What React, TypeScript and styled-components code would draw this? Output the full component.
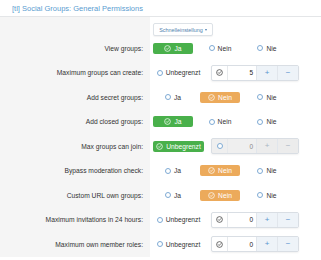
import React from "react";
import styled, { createGlobalStyle, css } from "styled-components";

const Global = createGlobalStyle`
  html, body { margin: 0; padding: 0; background: #fff; }
  body { font-family: "Liberation Sans", Arial, sans-serif; color: #333; }
`;

const Page = styled.div`
  width: 321px;
  height: 260px;
  overflow: hidden;
  background: #fff;
`;

const Header = styled.div`
  height: 16px;
  border-bottom: 1px solid #e4e6e8;
  display: flex;
  align-items: center;
  padding-left: 12px;
`;

const Title = styled.h2`
  margin: 0;
  font-weight: normal;
  font-size: 7.5px;
  color: #5b9dd0;
  white-space: nowrap;
`;

const Row = styled.div<{ $h: number }>`
  display: grid;
  grid-template-columns: 150px 1fr;
  height: ${(p) => p.$h}px;
`;

const Label = styled.div`
  background: #f5f5f5;
  display: flex;
  align-items: center;
  justify-content: flex-end;
  padding-right: 7px;
  font-size: 6.7px;
  color: #333;
  white-space: nowrap;
`;

const Content = styled.div<{ $align?: string }>`
  display: flex;
  align-items: ${(p) => p.$align || "center"};
  padding-left: 3px;
  gap: 7px;
`;

const MenuButton = styled.div`
  margin-top: 6px;
  height: 13px;
  width: 60px;
  box-sizing: border-box;
  border: 1px solid #dde2e7;
  border-radius: 2px;
  background: #fff;
  display: flex;
  align-items: center;
  justify-content: center;
  gap: 2px;
  font-size: 5.4px;
  color: #4f7fae;
  box-shadow: 0 1px 1px rgba(0, 0, 0, 0.05);
`;

const Caret = styled.span`
  width: 0;
  height: 0;
  border-left: 1.5px solid transparent;
  border-right: 1.5px solid transparent;
  border-top: 2px solid #4f7fae;
`;

const tones = {
  green: "#49b04b",
  orange: "#ecaa5b",
};

const Option = styled.div<{ $w: number; $on?: "green" | "orange" }>`
  width: ${(p) => p.$w}px;
  height: 11px;
  border-radius: 2px;
  display: flex;
  align-items: center;
  justify-content: center;
  gap: 3px;
  font-size: 6.7px;
  white-space: nowrap;
  color: #333;
  ${(p) =>
    p.$on &&
    css`
      background: ${tones[p.$on]};
      color: #fff;
    `}
`;

const Radio = styled.span`
  width: 6px;
  height: 6px;
  box-sizing: border-box;
  border-radius: 50%;
  border: 1px solid #7eaad4;
  background: #fff;
  flex: none;
`;

const Group = styled.div<{ $disabled?: boolean }>`
  width: 88px;
  height: 16px;
  box-sizing: border-box;
  border: 1px solid #d9dee4;
  border-radius: 2px;
  display: flex;
  overflow: hidden;
  background: ${(p) => (p.$disabled ? "#efefef" : "#fff")};
  box-shadow: 0 1px 2px rgba(0, 0, 0, 0.06);
`;

const IconCell = styled.div`
  width: 15px;
  flex: none;
  display: flex;
  align-items: center;
  justify-content: center;
  border-right: 1px solid #e6e9ec;
`;

const Value = styled.div<{ $disabled?: boolean }>`
  flex: 1;
  display: flex;
  align-items: center;
  justify-content: flex-end;
  padding-right: 3px;
  font-size: 6.5px;
  color: ${(p) => (p.$disabled ? "#888" : "#222")};
`;

const Step = styled.div<{ $disabled?: boolean }>`
  width: 20px;
  flex: none;
  display: flex;
  align-items: center;
  justify-content: center;
  border-left: 1px solid #e1e6ec;
  background: ${(p) => (p.$disabled ? "#ececec" : "#eef3f8")};
  color: ${(p) => (p.$disabled ? "#a9b5c2" : "#5b95cf")};
  font-size: 8px;
  line-height: 1;
`;

const CheckIcon = ({ color = "#fff", size = 7 }: { color?: string; size?: number }) => (
  <svg width={size} height={size} viewBox="0 0 16 16" fill="none">
    <circle cx="8" cy="8" r="6.6" stroke={color} strokeWidth="1.6" />
    <path d="M5.2 8.3l2 2 3.8-4.2" stroke={color} strokeWidth="1.6" strokeLinecap="round" strokeLinejoin="round" />
  </svg>
);

type Tri = "ja" | "nein" | "nie";

const TriChoice = ({ value }: { value: Tri }) => {
  const items: { k: Tri; t: string; tone: "green" | "orange" }[] = [
    { k: "ja", t: "Ja", tone: "green" },
    { k: "nein", t: "Nein", tone: "orange" },
    { k: "nie", t: "Nie", tone: "orange" },
  ];
  return (
    <>
      {items.map((it) =>
        it.k === value ? (
          <Option key={it.k} $w={40} $on={it.tone}>
            <CheckIcon />
            {it.t}
          </Option>
        ) : (
          <Option key={it.k} $w={40}>
            <Radio />
            {it.t}
          </Option>
        )
      )}
    </>
  );
};

const LimitChoice = ({ unlimited, value }: { unlimited: boolean; value: number }) => (
  <>
    {unlimited ? (
      <Option $w={51} $on="green">
        <CheckIcon />
        Unbegrenzt
      </Option>
    ) : (
      <Option $w={51}>
        <Radio />
        Unbegrenzt
      </Option>
    )}
    <Group $disabled={unlimited}>
      <IconCell>{unlimited ? <Radio /> : <CheckIcon color="#333" size={7} />}</IconCell>
      <Value $disabled={unlimited}>{value}</Value>
      <Step $disabled={unlimited}>+</Step>
      <Step $disabled={unlimited}>−</Step>
    </Group>
  </>
);

type RowDef =
  | { label: string; kind: "tri"; value: Tri }
  | { label: string; kind: "limit"; unlimited: boolean; value: number };

const rows: RowDef[] = [
  { label: "View groups:", kind: "tri", value: "ja" },
  { label: "Maximum groups can create:", kind: "limit", unlimited: false, value: 5 },
  { label: "Add secret groups:", kind: "tri", value: "nein" },
  { label: "Add closed groups:", kind: "tri", value: "ja" },
  { label: "Max groups can join:", kind: "limit", unlimited: true, value: 0 },
  { label: "Bypass moderation check:", kind: "tri", value: "nein" },
  { label: "Custom URL own groups:", kind: "tri", value: "nein" },
  { label: "Maximum invitations in 24 hours:", kind: "limit", unlimited: false, value: 0 },
  { label: "Maximum own member roles:", kind: "limit", unlimited: false, value: 0 },
];

export default function App() {
  return (
    <Page>
      <Global />
      <Header>
        <Title>[tl] Social Groups: General Permissions</Title>
      </Header>
      <Row $h={19}>
        <Label />
        <Content $align="flex-start">
          <MenuButton>
            Schnelleinstellung <Caret />
          </MenuButton>
        </Content>
      </Row>
      {rows.map((r) => (
        <Row key={r.label} $h={24.5}>
          <Label>{r.label}</Label>
          <Content>
            {r.kind === "tri" ? (
              <TriChoice value={r.value} />
            ) : (
              <LimitChoice unlimited={r.unlimited} value={r.value} />
            )}
          </Content>
        </Row>
      ))}
    </Page>
  );
}
